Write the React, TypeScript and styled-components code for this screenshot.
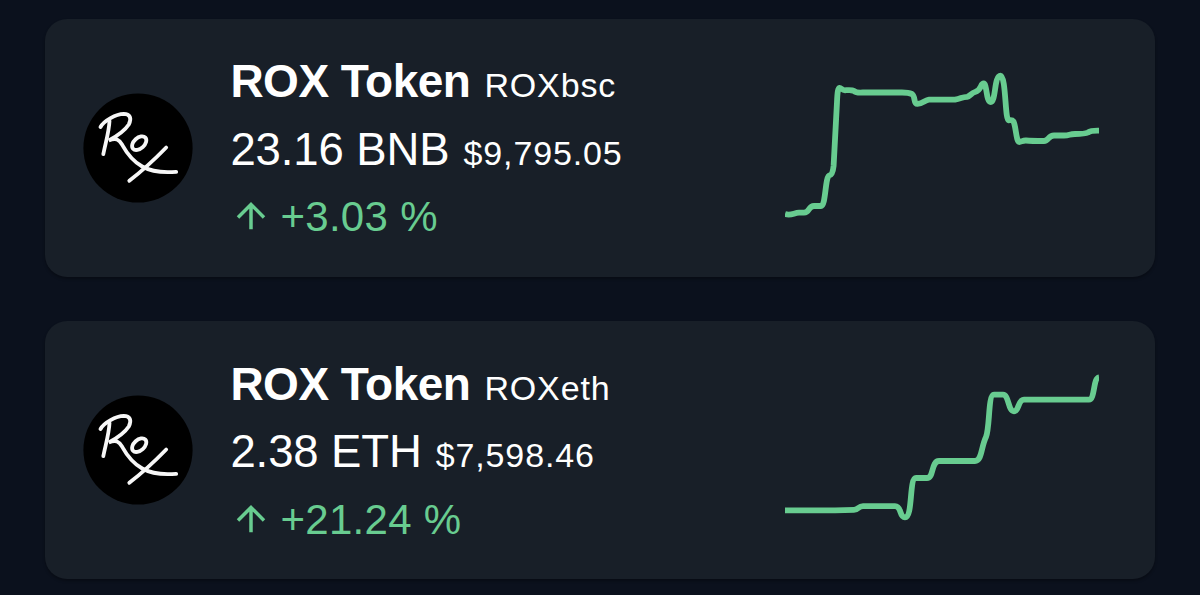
import styled, { createGlobalStyle } from "styled-components";

const tokens = [
  {
    id: "bsc",
    name: "ROX Token",
    symbol: "ROXbsc",
    amount: "23.16 BNB",
    value: "$9,795.05",
    change: "+3.03 %",
    line: "M0 154 C6 156 9 152.8 14 152.7 H19 C25 152.7 23 146 29 146 H36 C41 146 40 116 44.5 115.3 C46.8 115 48 112 48.6 106 L52 42 C52.4 32 53 28 54.5 27.8 C56.5 27.8 57 30.3 60 30.3 C64 30 67 29.6 69 31 C71 32.8 74 32.8 78 32.5 H117 C121 32.5 124 32.7 127 34 C131 37 128 44 132.5 43.8 C138 43.5 140 40 144 39.7 H170 C176 38.7 177 37 182 36.8 C186 36 186 33 190 32 C197 30 195 23.5 198.7 23.5 C202 23.5 201 42 205.7 42 C211 42 209 15.7 215.5 15.7 C221 15.7 220 60 223.5 60.3 C226 60.3 227 59.5 228.5 61.5 C231 66 231 82 234.5 82 C236 82 238 80.3 241 80.5 C246 81 252 81 259 81 C264 81 263 75.5 269 75.5 H279 C285 75.5 284 74 290 74 C298 74 300 74 303 72.5 C306 70.5 309 70.7 314 70.7",
  },
  {
    id: "eth",
    name: "ROX Token",
    symbol: "ROXeth",
    amount: "2.38 ETH",
    value: "$7,598.46",
    change: "+21.24 %",
    line: "M0 147.3 H50 L69 146.8 C74 146.8 73 143.1 78 143.1 H110 C117 143.1 114 154.3 120 154.3 C128 154.3 124 115 131 115 H142 C149 115 146 98 154 98 H190 C197 98 196 84 201 74 C205 64 203 31.7 209 31.7 H218 C224 31.7 223 48.3 229 48.3 C234 48.3 233 36.7 239 36.7 H304 C310 36.7 308 15 314 14.3",
  },
];

function Logo() {
  return (
    <LogoSvg viewBox="0 0 110 110">
      <circle cx="55" cy="55" r="54.6" fill="#000" />
      <g fill="none" stroke="#f7f7f7" strokeWidth="3.8" strokeLinecap="round">
        <path d="M26.5 28 C26 39 22.5 50 20.3 61.2" />
        <path d="M17.5 34 C21 27.5 33 21 40.8 20.8 C47 20.8 49 25.5 45.8 31.5 C42.5 36.5 35 42.5 25.8 47.5 C33 44.5 36 46.5 39.2 51.8 C44 60.5 49.5 68 59.2 73.5 C69 79 80 80 93.2 78.8" />
        <path d="M83.2 54.5 C73 65 59 78 46.3 87.8" />
        <ellipse cx="56.2" cy="50.2" rx="8.3" ry="5.3" transform="rotate(-42 56.2 50.2)" />
      </g>
    </LogoSvg>
  );
}

function App() {
  return (
    <Page>
      <GlobalStyle />
      {tokens.map((token) => (
        <Card key={token.id}>
          <Logo />
          <Info>
            <Row>
              <Title>{token.name}</Title>
              <Small>{token.symbol}</Small>
            </Row>
            <Row>
              <Amount>{token.amount}</Amount>
              <Small>{token.value}</Small>
            </Row>
            <Row>
              <Arrow viewBox="0 0 30 30">
                <path d="M15 28.3 V3.4 M2 16.4 L15 3.4 L28 16.4" />
              </Arrow>
              <Change>{token.change}</Change>
            </Row>
          </Info>
          <Chart viewBox="0 0 314 175">
            <path d={token.line} />
          </Chart>
        </Card>
      ))}
    </Page>
  );
}

const GlobalStyle = createGlobalStyle`
  body {
    margin: 0;
    background-color: #0b111d;
    overflow: hidden;
  }
`;

const Page = styled.div`
  box-sizing: border-box;
  height: 595px;
  padding: 18.5px 45px 0;
  display: flex;
  flex-direction: column;
  gap: 44.5px;
  overflow: hidden;
  font-family: "Liberation Sans", Arial, sans-serif;
  color: white;
`;

const Card = styled.div`
  box-sizing: border-box;
  flex: none;
  height: 258px;
  padding: 0 56px 0 38px;
  display: flex;
  align-items: center;
  border-radius: 22px;
  background-color: #181f28;
  box-shadow: 0 2px 3px rgba(0, 0, 0, 0.3);
`;

const LogoSvg = styled.svg`
  flex: none;
  width: 110px;
  height: 110px;
`;

const Info = styled.div`
  flex: 1;
  margin-left: 37.4px;
  padding-top: 4.4px;
`;

const Row = styled.div`
  display: flex;
  align-items: baseline;
  height: 67.5px;
  line-height: 67.5px;
  white-space: nowrap;
`;

const Title = styled.span`
  font-size: 46px;
  font-weight: 700;
  letter-spacing: -0.5px;
`;

const Amount = styled.span`
  font-size: 45.5px;
  letter-spacing: -0.1px;
`;

const Small = styled.span`
  margin-left: 14px;
  font-size: 34px;
  letter-spacing: 0.85px;
`;

const Change = styled.span`
  margin-left: 14.5px;
  font-size: 42px;
  letter-spacing: 0.3px;
  color: #68cc90;
`;

const Arrow = styled.svg`
  width: 30px;
  height: 30px;
  margin-left: 5.5px;
  fill: none;
  stroke: #68cc90;
  stroke-width: 3.5;
`;

const Chart = styled.svg`
  flex: none;
  width: 314px;
  height: 175px;
  fill: none;
  stroke: #68cc90;
  stroke-width: 5.8;
  stroke-linejoin: round;
`;

export default App;
